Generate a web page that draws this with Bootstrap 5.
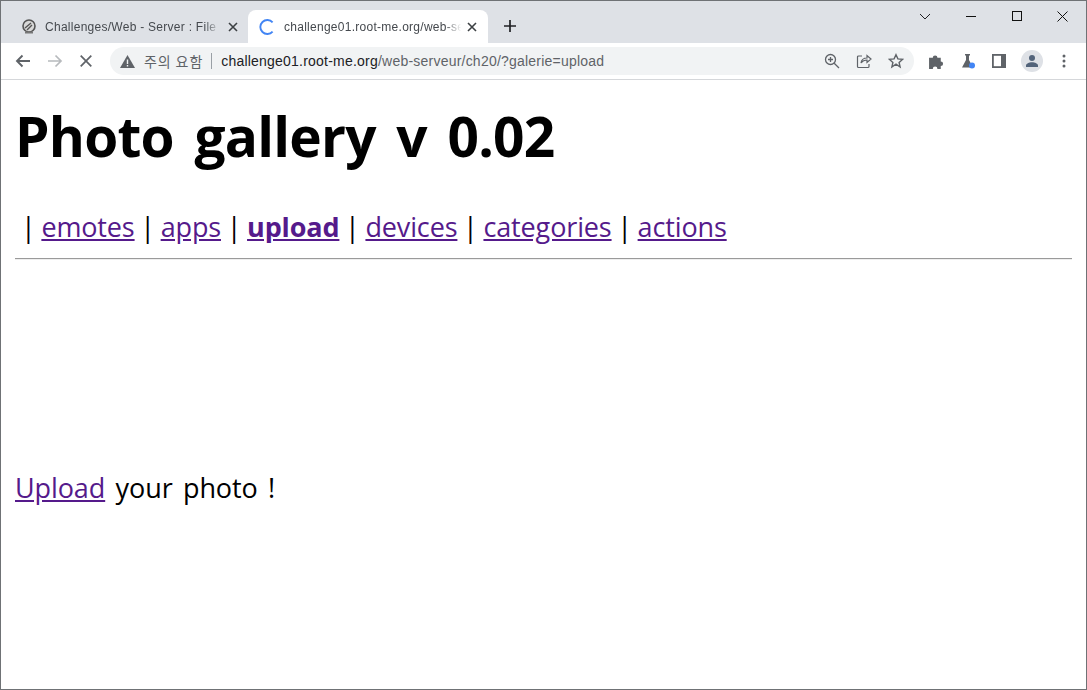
<!DOCTYPE html>
<html lang="en">
<head>
<meta charset="utf-8">
<title>Photo gallery</title>
<link href="https://cdn.jsdelivr.net/npm/bootstrap@5.3.0/dist/css/bootstrap.min.css" rel="stylesheet">
<style>
html,body{height:100%;margin:0;overflow:hidden}
body{background:#fff;color:#000;font-family:"Open Sans","Noto Sans CJK KR",sans-serif}
.win{height:690px;width:1087px;border:1px solid #6f7275;display:flex;flex-direction:column}
.strip{height:42px;background:#dee1e6;flex:none;padding-left:8px;display:flex;align-items:flex-end}
.tabx{height:33px;width:240px;display:flex;align-items:center;font:12px "Liberation Sans",sans-serif;color:#45494e;flex:none;position:relative}
.tabx.first{padding-left:12px;width:239px}
.tabx.on{background:#fff;border-radius:8px 8px 0 0;padding-left:11px;width:240px}
.tabx .ttl{width:177px;white-space:nowrap;margin-left:8px;-webkit-mask-image:linear-gradient(90deg,#000 90%,transparent 99%);mask-image:linear-gradient(90deg,#000 90%,transparent 99%);letter-spacing:.27px}
.tabx.on .ttl{margin-left:9px;width:179px}
.closex{margin-left:auto;margin-right:10px;flex:none}
.tabx.on .closex{margin-right:11px}
.newtab{margin-left:16px;margin-bottom:11px}
.winctl{margin-left:auto;align-self:flex-start;display:flex;align-items:center;height:30px;padding-right:18px}
.winctl svg{display:block}
.bar{height:37px;flex:none;border-bottom:1px solid #d5d7da;display:flex;align-items:center;padding-left:14px}
.omni{height:28px;width:804px;margin-left:18px;background:#f1f3f4;border-radius:14px;display:flex;align-items:center;padding-left:10px;font:14px "Liberation Sans",sans-serif;color:#5f6368;flex:none}
.warn{margin:0 9px 0 0}
.warnlbl{font-family:"Noto Sans CJK KR",sans-serif;font-size:14px;letter-spacing:.9px;color:#5f6368;white-space:nowrap}
.sep{width:1px;height:16px;background:#9aa0a6;margin:0 9px 0 8px}
.url b{font-weight:400;color:#202124}
.url{letter-spacing:.22px;white-space:nowrap}
.omni-ic{margin-left:auto;display:flex;gap:16px;padding-right:10px;align-items:center}
.tools{display:flex;align-items:center;margin-left:14px}
.face{width:22px;height:22px;background:#dee1e6;border-radius:50%;display:flex;align-items:center;justify-content:center;margin-left:15px}
.page{flex:1;padding:0 14px;overflow:hidden}
.gal-title{font-size:55px;font-weight:700;line-height:1;margin:0;padding-top:28px;height:90px;white-space:nowrap;color:#000;letter-spacing:-.75px;word-spacing:7px}
.gal-menu{font-size:27px;line-height:38px;margin:0;padding:38px 0 0 6px;height:88px;letter-spacing:-.14px;word-spacing:-1.2px;white-space:nowrap}
.page a{color:#551a8b;text-decoration:underline}
.gal-rule{margin:0;border:0;border-top:1px solid #9a9a9a;border-bottom:1px solid #eee;height:2px;opacity:1;width:1057px}
.gal-up{font-size:27px;line-height:38px;margin:209px 0 0;word-spacing:3.5px;letter-spacing:-.1px}
</style>
</head>
<body>
<div class="win">
  <div class="strip">
    <div class="tabx first">
      <svg width="16" height="16" viewBox="0 0 16 16"><circle cx="8" cy="7" r="6" fill="#d8d8d8" stroke="#555" stroke-width="1.6"/><path d="M4 9l6-5M6 11l5-5" stroke="#555" stroke-width="1.4"/><path d="M4 12.500h8v2H4z" fill="#777"/></svg>
      <span class="ttl">Challenges/Web - Server : File u</span>
      <svg class="closex" width="10" height="10" viewBox="0 0 10 10"><path d="M1 1l8 8M9 1l-8 8" stroke="#3c4043" stroke-width="1.6"/></svg>
    </div>
    <div class="tabx on">
      <svg width="16" height="16" viewBox="0 0 16 16"><path d="M13.600 3.400A7 7 0 1 0 13.600 12.600" fill="none" stroke="#4285f4" stroke-width="1.900"/></svg>
      <span class="ttl">challenge01.root-me.org/web-se</span>
      <svg class="closex" width="10" height="10" viewBox="0 0 10 10"><path d="M1 1l8 8M9 1l-8 8" stroke="#3c4043" stroke-width="1.6"/></svg>
    </div>
    <svg class="newtab" width="12" height="12" viewBox="0 0 12 12"><path d="M6 0v12M0 6h12" stroke="#202124" stroke-width="1.700"/></svg>
    <div class="winctl">
      <svg width="12" height="7" viewBox="0 0 12 7"><path d="M1 1l5 5 5-5" fill="none" stroke="#202124"/></svg>
      <svg style="margin-left:35px" width="10" height="1" viewBox="0 0 10 1"><path d="M0 .5h10" stroke="#111"/></svg>
      <svg style="margin-left:36px" width="10" height="10" viewBox="0 0 10 10"><rect x=".5" y=".5" width="9" height="9" fill="none" stroke="#111"/></svg>
      <svg style="margin-left:35px" width="11" height="11" viewBox="0 0 11 11"><path d="M.5.5l10 10M10.500.5l-10 10" stroke="#111"/></svg>
    </div>
  </div>
  <div class="bar">
    <svg width="16" height="14" viewBox="0 0 16 14"><path d="M15 7H2M7.500 1.500L2 7l5.500 5.500" fill="none" stroke="#5f6368" stroke-width="1.900"/></svg>
    <svg style="margin-left:16px" width="16" height="14" viewBox="0 0 16 14"><path d="M1 7h13M8.500 1.500L14 7l-5.500 5.500" fill="none" stroke="#b7babd" stroke-width="1.700"/></svg>
    <svg style="margin-left:17px" width="12" height="12" viewBox="0 0 12 12"><path d="M.7.700l10.600 10.600M11.300.7L.7 11.300" stroke="#5f6368" stroke-width="1.700"/></svg>
    <div class="omni">
      <svg class="warn" width="15" height="13" viewBox="0 0 15 13"><path d="M7.500 0L15 13H0z" fill="#5f6368"/><path d="M6.800 4.500h1.400v4.500H6.800zM6.800 10h1.400v1.400H6.800z" fill="#f1f3f4"/></svg>
      <span class="warnlbl">주의 요함</span><span class="sep"></span>
      <span class="url"><b>challenge01.root-me.org</b>/web-serveur/ch20/?galerie=upload</span>
      <span class="omni-ic">
        <svg width="16" height="16" viewBox="0 0 16 16"><circle cx="6.500" cy="6.500" r="5" fill="none" stroke="#5f6368" stroke-width="1.300"/><path d="M10.200 10.200L15 15M6.500 4v5M4 6.500h5" stroke="#5f6368" stroke-width="1.300"/></svg>
        <svg width="16" height="16" viewBox="0 0 16 16"><path d="M6 3H2.500A1 1 0 0 0 1.500 4v9.500a1 1 0 0 0 1 1h9.500a1 1 0 0 0 1-1V11" fill="none" stroke="#5f6368" stroke-width="1.200"/><path d="M5 10c.5-3.500 3-5 6-5V2.500L15 6l-4 3.500V7c-2.500 0-4.500 1-6 3z" fill="none" stroke="#5f6368" stroke-width="1.200"/></svg>
        <svg width="16" height="16" viewBox="0 0 16 16"><path d="M8 1.700l1.900 4.200 4.600.5-3.400 3.100 1 4.500L8 11.200l-4.100 2.800 1-4.500L1.500 6.400l4.600-.5z" fill="none" stroke="#5f6368" stroke-width="1.400"/></svg>
      </span>
    </div>
    <div class="tools">
      <svg width="17" height="17" viewBox="0 0 16 16"><path d="M1 4.500h3.500a2.200 2.200 0 1 1 4.400 0H12v3.400a2.200 2.200 0 1 1 0 4.400V15H8.900a2.200 2.200 0 1 0-4.400 0H1z" fill="#5f6368"/></svg>
      <svg style="margin-left:15px" width="16" height="16" viewBox="0 0 16 16"><path d="M5 1h5v1.500H9V7l4 7.500H2L6 7V2.500H5z" fill="#5f6368"/><circle cx="12" cy="12.500" r="3" fill="#4285f4"/></svg>
      <svg style="margin-left:16px" width="14" height="14" viewBox="0 0 14 14"><rect x=".9" y=".9" width="12.200" height="12.200" fill="#fff" stroke="#5f6368" stroke-width="1.800"/><path d="M9 0h5v14H9z" fill="#5f6368"/></svg>
      <span class="face"><svg width="14" height="14" viewBox="0 0 14 14"><circle cx="7" cy="4" r="3" fill="#52637a"/><path d="M1 13v-1.500C1 9.500 4 8.200 7 8.200s6 1.300 6 3.300V13z" fill="#52637a"/></svg></span>
      <svg style="margin-left:19px" width="4" height="14" viewBox="0 0 4 14"><circle cx="2" cy="2" r="1.500" fill="#5f6368"/><circle cx="2" cy="7" r="1.500" fill="#5f6368"/><circle cx="2" cy="12" r="1.500" fill="#5f6368"/></svg>
    </div>
  </div>
  <main class="page">
    <h1 class="gal-title">Photo gallery v 0.02</h1>
    <p class="gal-menu">| <a href="#">emotes</a> | <a href="#">apps</a> | <a href="#"><b>upload</b></a> | <a href="#">devices</a> | <a href="#">categories</a> | <a href="#">actions</a></p>
    <hr class="gal-rule">
    <p class="gal-up"><a href="#">Upload</a> your photo !</p>
  </main>
</div>
<script src="https://cdn.jsdelivr.net/npm/bootstrap@5.3.0/dist/js/bootstrap.bundle.min.js"></script>
</body>
</html>
